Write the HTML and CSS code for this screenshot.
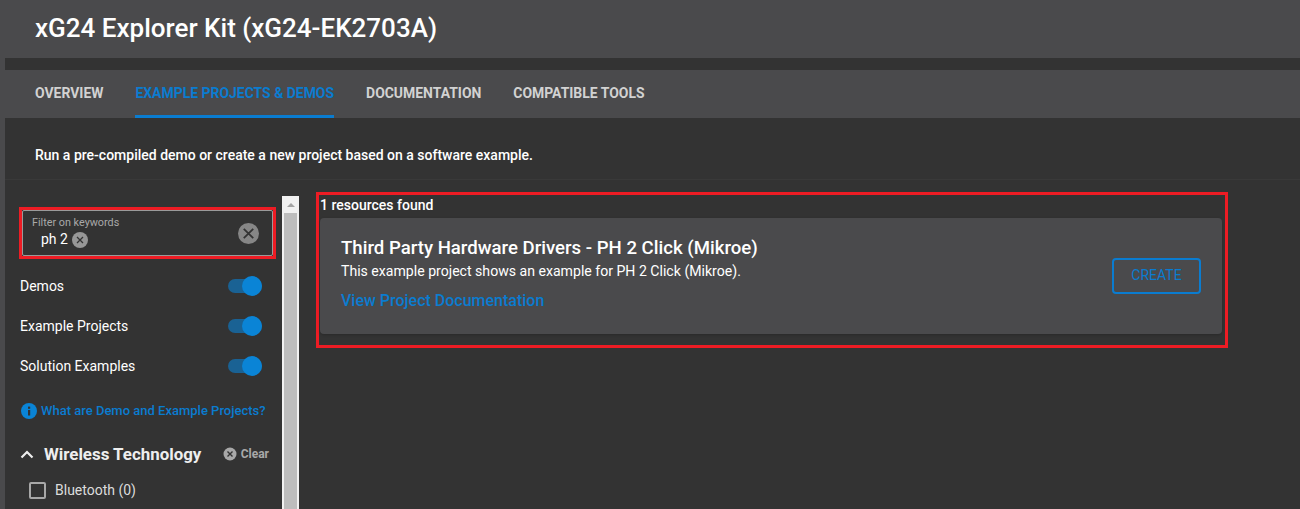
FILE: index.html
```html
<!DOCTYPE html>
<html lang="en">
<head>
  <meta charset="UTF-8" />
  <meta name="viewport" content="width=device-width, initial-scale=1.0"/>
  <title>xG24 Explorer Kit</title>
  <link rel="stylesheet" href="styles.css">
</head>
<body>
  <header class="kit-header">
    <h1>xG24 Explorer Kit (xG24-EK2703A)</h1>
  </header>

  <div class="page">
    <nav class="tabs">
      <a class="tab">OVERVIEW</a>
      <a class="tab active">EXAMPLE PROJECTS &amp; DEMOS</a>
      <a class="tab">DOCUMENTATION</a>
      <a class="tab">COMPATIBLE TOOLS</a>
    </nav>

    <p class="intro">Run a pre-compiled demo or create a new project based on a software example.</p>

    <div class="columns">
      <aside class="sidebar">
        <div class="filters">
          <div class="red-box filter-wrap">
            <div class="filter-box">
              <div class="filter-text">
                <label>Filter on keywords</label>
                <div class="chip">ph 2
                  <svg class="chip-x" viewBox="0 0 16 16"><circle cx="8" cy="8" r="8" fill="#979797"/><path d="M5 5l6 6M11 5l-6 6" stroke="#333" stroke-width="1.3"/></svg>
                </div>
              </div>
              <svg class="clear-all" viewBox="0 0 20 20"><circle cx="10" cy="10" r="10" fill="#868686"/><path d="M5.5 5.5l9 9M14.500 5.500l-9 9" stroke="#333" stroke-width="1.700"/></svg>
            </div>
          </div>

          <div class="toggle-row"><span>Demos</span><span class="toggle"><i></i></span></div>
          <div class="toggle-row"><span>Example Projects</span><span class="toggle"><i></i></span></div>
          <div class="toggle-row"><span>Solution Examples</span><span class="toggle"><i></i></span></div>

          <a class="help">
            <svg viewBox="0 0 16 16"><circle cx="8" cy="8" r="8" fill="#0a84d6"/><rect x="7" y="7" width="2.200" height="5.500" fill="#333"/><rect x="7" y="3.600" width="2.200" height="2.200" fill="#333"/></svg>
            What are Demo and Example Projects?
          </a>

          <div class="group-head">
            <svg class="chevron" viewBox="0 0 14 9"><path d="M1.500 7.500L7 2l5.500 5.500" fill="none" stroke="#eee" stroke-width="2.200"/></svg>
            <h3>Wireless Technology</h3>
            <span class="clear">
              <svg viewBox="0 0 14 14"><circle cx="7" cy="7" r="6.500" fill="#a8a8a8"/><path d="M4.500 4.500l5 5M9.500 4.500l-5 5" stroke="#333" stroke-width="1.400"/></svg>
              Clear
            </span>
          </div>
          <div class="check-row"><span class="checkbox"></span>Bluetooth (0)</div>
        </div>

        <div class="scrollbar">
          <div class="scroll-up"></div>
          <div class="scroll-thumb"></div>
        </div>
      </aside>

      <main class="results red-box">
        <div class="found">1 resources found</div>
        <section class="card">
          <div class="card-body">
            <h2>Third Party Hardware Drivers - PH 2 Click (Mikroe)</h2>
            <p>This example project shows an example for PH 2 Click (Mikroe).</p>
            <a>View Project Documentation</a>
          </div>
          <button class="create">CREATE</button>
        </section>
      </main>
    </div>
  </div>
</body>
</html>
```

FILE: styles.css
```css
* { box-sizing: border-box; margin:0; padding:0; }
html, body { height:100%; overflow:hidden; }
body {
  font-family: Roboto, 'Liberation Sans', sans-serif;
  background:#4a4a4c;
  color:#fff;
}
.kit-header {
  height:58px;
  padding:12px 0 0 35px;
}
.kit-header h1 {
  font-size:26px; line-height:32px; font-weight:500;
}
.page {
  margin-left:5px;
  height:451px;
  background:#333;
  padding-top:12px;
  overflow:hidden;
}
.tabs {
  display:flex; gap:32px;
  height:48px;
  padding-left:30px;
  background:#4a4a4c;
}
.tab {
  font-size:13.95px; font-weight:700; line-height:46px;
  color:#d2d2d2;
}
.tab.active {
  color:#0a7cd0;
  border-bottom:3px solid #0a7cd0;
}
.intro {
  height:62px;
  padding:28px 0 0 30px;
  font-size:14px; line-height:18px; font-weight:500;
  border-bottom:1px solid #393939;
}
.columns {
  display:flex;
  padding-top:12px;
}
.red-box { border:3px solid #ed1c24; }
.sidebar {
  display:flex;
  width:311px;
  flex:none;
}
.filters {
  width:277px;
  padding:15px 0 0 15px;
  flex:none;
}
.filter-wrap {
  width:257px; height:52px;
  margin:0 0 7px -1px;
}
.filter-box {
  display:flex; align-items:center; justify-content:space-between;
  height:100%;
  padding:0 13px 0 9px;
  border:1px solid #9a9a9a;
  border-radius:2px;
}
.filter-text { padding-bottom:2px; }
.filter-text label {
  display:block;
  font-size:10.8px; line-height:13px; color:#a9a9a9;
}
.chip {
  display:flex; align-items:center; gap:4px;
  padding-left:9px; margin-top:2px;
  font-size:14px; line-height:17px;
}
.chip-x { width:16px; height:16px; }
.clear-all { width:21px; height:21px; }
.toggle-row {
  display:flex; align-items:center; justify-content:space-between;
  height:40px; width:242px;
  font-size:14px;
}
.toggle {
  position:relative;
  width:34px; height:14px;
  border-radius:7px;
  background:#1a6294;
}
.toggle i {
  position:absolute; right:0; top:-3px;
  width:20px; height:20px;
  border-radius:50%;
  background:#0a84d6;
}
.help {
  display:flex; align-items:center; gap:4px;
  margin:17px 0 0 1px;
  font-size:13px; font-weight:500; line-height:16px;
  color:#0a7cd0;
  white-space:nowrap;
}
.help svg { width:16px; height:16px; flex:none; }
.group-head {
  display:flex; align-items:center;
  margin-top:23px; width:249px; height:24px;
}
.chevron { width:14px; height:9px; margin-right:10px; flex:none; }
.group-head h3 {
  font-size:16.9px; font-weight:700; color:#eee;
  white-space:nowrap;
}
.clear {
  display:flex; align-items:center; gap:4px;
  margin-left:auto;
  font-size:12px; font-weight:700; color:#a8a8a8;
}
.clear svg { width:14px; height:14px; }
.check-row {
  display:flex; align-items:center; gap:9px;
  margin:15px 0 0 9px;
  font-size:14px; line-height:18px; color:#dcdcdc;
}
.checkbox {
  width:17px; height:17px;
  border:2px solid #a8a8a8;
  border-radius:2px;
}
.scrollbar {
  width:17px; height:340px;
  margin-top:4px;
  background:#f1f1f1;
  padding:0 2px;
}
.scroll-up {
  width:0; height:0;
  margin:7px auto 6px;
  border:4px solid transparent;
  border-top:0;
  border-bottom-color:#a3a3a3;
}
.scroll-thumb {
  height:300px;
  background:#bdbdbd;
}
.results {
  width:912px; height:156px;
  padding:0 3px 0 1px;
  flex:none;
}
.found {
  font-size:14px; font-weight:500; line-height:20px;
  height:23px;
}
.card {
  display:flex; align-items:center; justify-content:space-between;
  width:902px; height:116px;
  padding:0 21px 0 21px;
  background:#4a4a4c;
  border-radius:4px;
  box-shadow:0 1px 3px rgba(0,0,0,0.2);
}
.card-body {
  align-self:flex-start;
  padding-top:19px;
}
.card h2 {
  font-size:18.6px; font-weight:500; line-height:22px;
}
.card p {
  margin-top:2px;
  font-size:14.1px; line-height:20px;
}
.card a {
  display:block;
  margin-top:10px;
  font-size:16px; font-weight:500; line-height:20px;
  color:#0a7cd0;
}
.create {
  width:89px; height:36px;
  padding-bottom:2px;
  background:none;
  border:2px solid #0a7cd0;
  border-radius:4px;
  font-family:inherit; font-size:14px; font-weight:400;
  color:#0a7cd0;
}
```
